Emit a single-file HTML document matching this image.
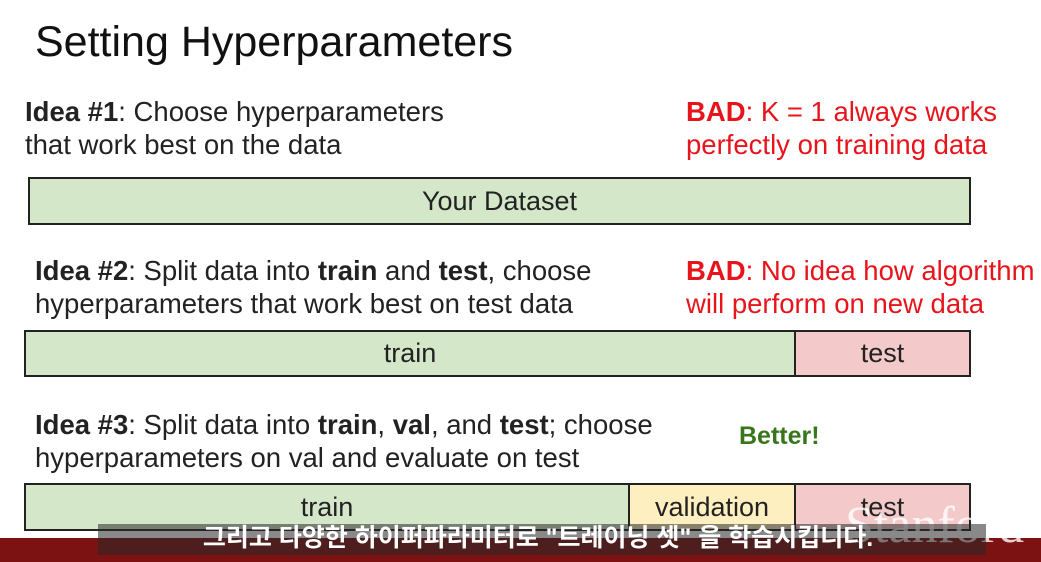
<!DOCTYPE html>
<html><head><meta charset="utf-8"><style>
body{margin:0;width:1041px;height:562px;background:#fff;position:relative;overflow:hidden;font-family:"Liberation Sans",Arial,sans-serif;color:#222}
.a{position:absolute;white-space:nowrap}
.t{font-size:27.5px;line-height:33px}
.r{color:#e8141b}
.box{position:absolute;border:2px solid #222;box-sizing:border-box;font-size:27px;display:flex;align-items:center;justify-content:center}
.g{background:#d4e7c9}.p{background:#f3c9c9}.y{background:#fdefc0}
</style></head><body>
<div class="a" style="left:35px;top:18px;font-size:43px;color:#111">Setting Hyperparameters</div>
<div class="a t" style="left:25px;top:95px"><b>Idea #1</b>: Choose hyperparameters<br>that work best on the data</div>
<div class="a t r" style="left:686px;top:95px"><b>BAD</b>: K = 1 always works<br>perfectly on training data</div>
<div class="box g" style="left:28px;top:177px;width:943px;height:48px">Your Dataset</div>
<div class="a t" style="left:35px;top:254px"><b>Idea #2</b>: Split data into <b>train</b> and <b>test</b>, choose<br>hyperparameters that work best on test data</div>
<div class="a t r" style="left:686px;top:254px"><b>BAD</b>: No idea how algorithm<br>will perform on new data</div>
<div class="box g" style="left:24px;top:330px;width:772px;height:47px">train</div>
<div class="box p" style="left:794px;top:330px;width:177px;height:47px">test</div>
<div class="a t" style="left:35px;top:408px"><b>Idea #3</b>: Split data into <b>train</b>, <b>val</b>, and <b>test</b>; choose<br>hyperparameters on val and evaluate on test</div>
<div class="a" style="left:739px;top:422px;font-size:25px;font-weight:bold;color:#38761d">Better!</div>
<div class="box g" style="left:24px;top:483px;width:606px;height:48px">train</div>
<div class="box y" style="left:628px;top:483px;width:168px;height:48px">validation</div>
<div class="box p" style="left:794px;top:483px;width:177px;height:48px">test</div>
<div class="a" style="left:0;top:538px;width:1041px;height:24px;background:#7c1212"></div>
<div class="a" style="left:845px;top:496px;font-family:'Liberation Serif',serif;font-size:52px;color:rgba(255,255,255,0.8)">Stanford</div>
<div class="a" style="left:98px;top:524px;width:888px;height:31px;background:rgba(40,40,40,0.55)"></div>
<div class="a" style="left:98px;top:522px;width:888px;text-align:center;font-size:25px;font-weight:bold;color:#fff;font-family:'Liberation Sans','Noto Sans CJK KR',sans-serif;line-height:32px;text-indent:-8px">그리고 다양한 하이퍼파라미터로 "트레이닝 셋" 을 학습시킵니다.</div>
</body></html>
